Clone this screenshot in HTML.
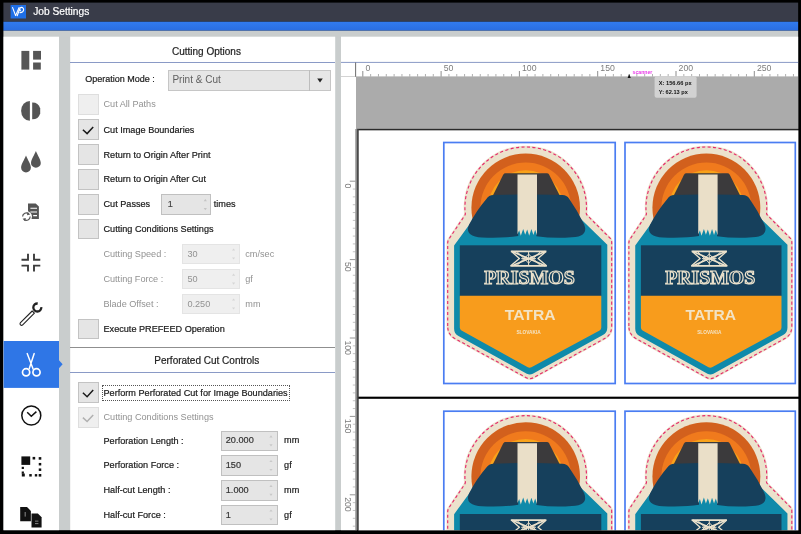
<!DOCTYPE html>
<html lang="en"><head><meta charset="utf-8"><title>Job Settings</title>
<style>
html,body{margin:0;padding:0;background:#000;}
body{width:801px;height:534px;overflow:hidden;position:relative;font-family:"Liberation Sans",sans-serif;}
#app{position:absolute;left:0;top:0;width:801px;height:534px;background:#000;overflow:hidden;}
.abs{position:absolute;}
.t{position:absolute;white-space:nowrap;line-height:1;font-family:"Liberation Sans",sans-serif;}
.b{-webkit-text-stroke:0.2px currentColor;}
.cb{position:absolute;box-sizing:border-box;background:#e5e5e5;border:1px solid #c3c3c3;}
.cb.dis{background:#efefef;border-color:#dedede;}
.nb{position:absolute;box-sizing:border-box;background:#e5e5e5;border:1px solid #c0c0c0;}
.nb.dis{background:#efefef;border-color:#e4e4e4;}
svg{position:absolute;left:0;top:0;overflow:visible;will-change:transform;}
#txt{position:absolute;left:0;top:0;width:801px;height:534px;will-change:transform;}
</style></head><body><div id="app">

<svg width="801" height="534" viewBox="0 0 801 534" style="will-change:auto"><defs><linearGradient id="bl" x1="0" y1="0" x2="0" y2="1"><stop offset="0" stop-color="#317bef"/><stop offset="1" stop-color="#2a6de1"/></linearGradient></defs><rect x="3.4" y="2.6" width="795" height="19.1" fill="#393c49"/><rect x="3.4" y="21.7" width="795" height="9" fill="url(#bl)"/><rect x="3.4" y="30.7" width="795" height="499.8" fill="#c9cdcd"/><rect x="3.6" y="36.7" width="55.4" height="493.8" fill="#fff"/><rect x="70.2" y="36.7" width="265" height="493.8" fill="#fff"/><rect x="341" y="36.7" width="457.4" height="493.8" fill="#fff"/><rect x="3.6" y="341" width="55.4" height="46.9" fill="#2f76e6"/></svg>


<div class="abs" style="left:70px;top:61.7px;width:265px;height:1px;background:#8a9ac6;"></div>

<div class="abs" style="left:168px;top:70px;width:162.5px;height:20.5px;box-sizing:border-box;background:#e6e6e6;border:1px solid #c6c6c6;"></div>
<div class="abs" style="left:309px;top:70px;width:1px;height:20.5px;background:#bdbdbd;"></div>

<div class="cb dis" style="left:77.8px;top:94.4px;width:21px;height:20.6px;"></div>

<div class="cb" style="left:77.8px;top:119.3px;width:21px;height:20.6px;"></div>

<div class="cb" style="left:77.8px;top:144.3px;width:21px;height:20.6px;"></div>

<div class="cb" style="left:77.8px;top:169.2px;width:21px;height:20.6px;"></div>

<div class="cb" style="left:77.8px;top:194.2px;width:21px;height:20.6px;"></div>

<div class="cb" style="left:77.8px;top:218.7px;width:21px;height:20.6px;"></div>

<div class="cb" style="left:77.8px;top:318.9px;width:21px;height:20.6px;"></div>

<div class="cb" style="left:77.8px;top:382.4px;width:21px;height:20.6px;"></div>

<div class="cb dis" style="left:77.8px;top:407.2px;width:21px;height:20.6px;"></div>

<div class="nb" style="left:161px;top:194px;width:50px;height:21px;"></div>



<div class="nb dis" style="left:181.7px;top:243.8px;width:58px;height:20.5px;"></div>



<div class="nb dis" style="left:181.7px;top:268.9px;width:58px;height:20.5px;"></div>



<div class="nb dis" style="left:181.7px;top:293.8px;width:58px;height:20.5px;"></div>


<div class="abs" style="left:70px;top:347.3px;width:265px;height:1px;background:#8f8f8f;"></div>

<div class="abs" style="left:70px;top:371.7px;width:265px;height:1px;background:#8a9ac6;"></div>
<div class="abs" style="left:102px;top:384.8px;width:188px;height:16px;box-sizing:border-box;border:1px dotted #555;"></div>

<div class="nb" style="left:220.5px;top:430.8px;width:57.5px;height:20.3px;"></div>



<div class="nb" style="left:220.5px;top:455.4px;width:57.5px;height:20.3px;"></div>



<div class="nb" style="left:220.5px;top:480.3px;width:57.5px;height:20.3px;"></div>



<div class="nb" style="left:220.5px;top:504.9px;width:57.5px;height:20.3px;"></div>


<svg width="801" height="534" viewBox="0 0 801 534">
<rect x="10.6" y="5" width="15.4" height="13.5" fill="#1f6fe6"/>
<path d="M12.6 7.6 L15.6 15.6 L19 7.6 M17.2 15.8 L19.6 9.2 M20 12.6 C24.6 12.6 24.6 7.4 21.4 7.4 C19.6 7.4 19.4 9.6 20.4 10.6" fill="none" stroke="#fff" stroke-width="1.1" stroke-linecap="round" stroke-linejoin="round"/>
<path d="M317.2 78.4 h5.6 l-2.8 4 z" fill="#222"/>
<path d="M82.9 129.7 L87.1 133.6 L93.2 127.0" fill="none" stroke="#1a1a1a" stroke-width="1.5" stroke-linejoin="miter"/>
<path d="M82.9 392.8 L87.1 396.7 L93.2 390.1" fill="none" stroke="#1a1a1a" stroke-width="1.5" stroke-linejoin="miter"/>
<path d="M82.9 417.6 L87.1 421.5 L93.2 414.9" fill="none" stroke="#b0b0b0" stroke-width="1.5" stroke-linejoin="miter"/>
<path d="M203.7 201.2 h3.2 l-1.6 -2.2 z M203.7 208.0 h3.2 l-1.6 2.2 z" fill="#c4c4c4"/>
<path d="M232.0 250.6 h3.2 l-1.6 -2.2 z M232.0 257.4 h3.2 l-1.6 2.2 z" fill="#d6d6d6"/>
<path d="M232.0 275.7 h3.2 l-1.6 -2.2 z M232.0 282.5 h3.2 l-1.6 2.2 z" fill="#d6d6d6"/>
<path d="M232.0 300.6 h3.2 l-1.6 -2.2 z M232.0 307.4 h3.2 l-1.6 2.2 z" fill="#d6d6d6"/>
<path d="M269.4 437.5 h3.2 l-1.6 -2.2 z M269.4 444.3 h3.2 l-1.6 2.2 z" fill="#c8c8c8"/>
<path d="M269.4 462.1 h3.2 l-1.6 -2.2 z M269.4 468.9 h3.2 l-1.6 2.2 z" fill="#c8c8c8"/>
<path d="M269.4 487.0 h3.2 l-1.6 -2.2 z M269.4 493.8 h3.2 l-1.6 2.2 z" fill="#c8c8c8"/>
<path d="M269.4 511.6 h3.2 l-1.6 -2.2 z M269.4 518.4 h3.2 l-1.6 2.2 z" fill="#c8c8c8"/>
<path d="M59 360.2 L62.6 364.2 L59 368.2 z" fill="#2f76e6"/>
<rect x="21.4" y="50.9" width="7.9" height="18.7" fill="#555555"/><rect x="33.1" y="50.9" width="7.9" height="8.7" fill="#555555"/><rect x="33.1" y="62.5" width="7.7" height="7.1" fill="#555555"/>
<path d="M29.9 100.9 A8.8 9.95 0 0 0 29.9 120.8 z" fill="#555555"/>
<path d="M32.2 102.5 A8.2 8.4 0 0 1 40.2 108.4 L40.2 113.4 A8.2 8.4 0 0 1 32.2 119.3 z" fill="#555555"/>
<path d="M35.9 150.9 C37.4 154.9 40.8 159.4 40.8 162.9 A4.9 4.9 0 0 1 31.0 162.9 C31.0 159.4 34.4 154.9 35.9 150.9 z" fill="#555555"/>
<path d="M26 155.6 C27.5 159.6 30.9 164.1 30.9 167.6 A4.9 4.9 0 0 1 21.1 167.6 C21.1 164.1 24.5 159.6 26 155.6 z" fill="#555555"/>
<path d="M28 203.4 h7.7 l3.2 3.2 v12.4 h-10.9 z" fill="#555555"/>
<path d="M30.4 208.2 h6.6 M30.4 212 h6.6 M33.2 215.6 h3.8" stroke="#fff" stroke-width="1.1" fill="none"/>
<circle cx="26.4" cy="216.6" r="5.6" fill="#fff"/>
<path d="M22.6 216.6 A3.8 3.8 0 0 1 28.8 213.7 M30.2 216.6 A3.8 3.8 0 0 1 24 219.5" stroke="#555555" stroke-width="1.2" fill="none"/>
<path d="M27.6 212 l2.6 2.4 l-3.2 0.8 z M25.2 221.2 l-2.6 -2.4 l3.2 -0.8 z" fill="#555555"/>
<path d="M21.5 259.8 H28 V253.7 M40.3 259.8 H34 V253.7 M21.5 265.6 H28 V271.6 M40.3 265.6 H34 V271.6" stroke="#3c3c3c" stroke-width="1.9" fill="none"/>
<path d="M20.5 322.7 L32.2 311 L34.4 313.2 L22.7 324.9 A1.55 1.55 0 0 1 20.5 322.7 z" fill="#fff" stroke="#222" stroke-width="1.1" stroke-linejoin="round"/>
<path d="M41.3 307.2 A4 4 0 1 1 37.7 303.5" fill="none" stroke="#222" stroke-width="2.3"/>
<g fill="none" stroke="#fff" stroke-linecap="round"><path d="M27.2 353.6 L33.2 369.2 M34.2 353.6 L29.2 368.8" stroke-width="1.45"/><circle cx="26.1" cy="372.3" r="3.6" stroke-width="1.7"/><circle cx="36.5" cy="372.3" r="3.6" stroke-width="1.7"/></g>
<circle cx="31.3" cy="415.5" r="9.5" fill="none" stroke="#111" stroke-width="1.5"/><path d="M27.2 412.2 L31.3 416.2 L36.4 411.6" fill="none" stroke="#111" stroke-width="1.5"/>
<rect x="21.4" y="456.4" width="8.8" height="8.5" fill="#111"/>
<rect x="32.60" y="456.90" width="2.6" height="2.6" fill="#111"/>
<rect x="38.70" y="457.10" width="2.6" height="2.6" fill="#111"/>
<rect x="38.75" y="462.95" width="2.5" height="2.5" fill="#111"/>
<rect x="38.75" y="468.45" width="2.5" height="2.5" fill="#111"/>
<rect x="38.70" y="474.00" width="2.6" height="2.6" fill="#111"/>
<rect x="34.80" y="474.10" width="2.4" height="2.4" fill="#111"/>
<rect x="29.25" y="474.05" width="2.5" height="2.5" fill="#111"/>
<rect x="21.80" y="473.50" width="3.0" height="3.0" fill="#111"/>
<rect x="21.70" y="471.50" width="2.2" height="2.2" fill="#111"/>
<rect x="21.70" y="466.80" width="2.2" height="2.2" fill="#111"/>
<path d="M20.2 507 h6.8 l3.9 3.9 v10.3 h-10.7 z" fill="#111"/><path d="M31.5 513.6 h6.4 l3.7 3.7 v10.3 h-10.1 z" fill="#111"/>
<rect x="24.6" y="512" width="1.2" height="4.6" fill="#777"/><rect x="35" y="520.6" width="3.4" height="1.1" fill="#777"/><rect x="35" y="523" width="3.4" height="1.1" fill="#777"/>
<rect x="341" y="61.9" width="457.5" height="1" fill="#8a9ac6"/>
<rect x="356" y="76.4" width="442.5" height="52.6" fill="#ababab"/>
<rect x="341" y="76" width="15" height="0.8" fill="#c8c8c8"/>
<rect x="355.2" y="62.5" width="0.9" height="14.2" fill="#5c5c5c"/>
<path d="M370.63 74.00 V76.6 M378.46 74.00 V76.6 M386.29 74.00 V76.6 M394.12 74.00 V76.6 M401.95 74.00 V76.6 M409.78 74.00 V76.6 M417.61 74.00 V76.6 M425.44 74.00 V76.6 M433.27 74.00 V76.6 M448.93 74.00 V76.6 M456.76 74.00 V76.6 M464.59 74.00 V76.6 M472.42 74.00 V76.6 M480.25 74.00 V76.6 M488.08 74.00 V76.6 M495.91 74.00 V76.6 M503.74 74.00 V76.6 M511.57 74.00 V76.6 M527.23 74.00 V76.6 M535.06 74.00 V76.6 M542.89 74.00 V76.6 M550.72 74.00 V76.6 M558.55 74.00 V76.6 M566.38 74.00 V76.6 M574.21 74.00 V76.6 M582.04 74.00 V76.6 M589.87 74.00 V76.6 M605.53 74.00 V76.6 M613.36 74.00 V76.6 M621.19 74.00 V76.6 M629.02 74.00 V76.6 M636.85 74.00 V76.6 M644.68 74.00 V76.6 M652.51 74.00 V76.6 M660.34 74.00 V76.6 M668.17 74.00 V76.6 M683.83 74.00 V76.6 M691.66 74.00 V76.6 M699.49 74.00 V76.6 M707.32 74.00 V76.6 M715.15 74.00 V76.6 M722.98 74.00 V76.6 M730.81 74.00 V76.6 M738.64 74.00 V76.6 M746.47 74.00 V76.6 M762.13 74.00 V76.6 M769.96 74.00 V76.6 M777.79 74.00 V76.6 M785.62 74.00 V76.6 M793.45 74.00 V76.6" stroke="#9c9c9c" stroke-width="0.8" fill="none"/>
<path d="M362.80 71.00 V76.6 M441.10 71.00 V76.6 M519.40 71.00 V76.6 M597.70 71.00 V76.6 M676.00 71.00 V76.6 M754.30 71.00 V76.6" stroke="#707070" stroke-width="0.8" fill="none"/>
<text x="365.40" y="71.2" font-family='"Liberation Sans", sans-serif' font-size="8.7" fill="#7c7c7c">0</text>
<text x="443.70" y="71.2" font-family='"Liberation Sans", sans-serif' font-size="8.7" fill="#7c7c7c">50</text>
<text x="522.00" y="71.2" font-family='"Liberation Sans", sans-serif' font-size="8.7" fill="#7c7c7c">100</text>
<text x="600.30" y="71.2" font-family='"Liberation Sans", sans-serif' font-size="8.7" fill="#7c7c7c">150</text>
<text x="678.60" y="71.2" font-family='"Liberation Sans", sans-serif' font-size="8.7" fill="#7c7c7c">200</text>
<text x="756.90" y="71.2" font-family='"Liberation Sans", sans-serif' font-size="8.7" fill="#7c7c7c">250</text>
<path d="M352.80 189.04 H355.6 M352.80 196.88 H355.6 M352.80 204.72 H355.6 M352.80 212.56 H355.6 M352.80 220.40 H355.6 M352.80 228.24 H355.6 M352.80 236.08 H355.6 M352.80 243.92 H355.6 M352.80 251.76 H355.6 M352.80 267.44 H355.6 M352.80 275.28 H355.6 M352.80 283.12 H355.6 M352.80 290.96 H355.6 M352.80 298.80 H355.6 M352.80 306.64 H355.6 M352.80 314.48 H355.6 M352.80 322.32 H355.6 M352.80 330.16 H355.6 M352.80 345.84 H355.6 M352.80 353.68 H355.6 M352.80 361.52 H355.6 M352.80 369.36 H355.6 M352.80 377.20 H355.6 M352.80 385.04 H355.6 M352.80 392.88 H355.6 M352.80 400.72 H355.6 M352.80 408.56 H355.6 M352.80 424.24 H355.6 M352.80 432.08 H355.6 M352.80 439.92 H355.6 M352.80 447.76 H355.6 M352.80 455.60 H355.6 M352.80 463.44 H355.6 M352.80 471.28 H355.6 M352.80 479.12 H355.6 M352.80 486.96 H355.6 M352.80 502.64 H355.6 M352.80 510.48 H355.6 M352.80 518.32 H355.6 M352.80 526.16 H355.6" stroke="#b4b4b4" stroke-width="0.8" fill="none"/>
<path d="M349.80 181.20 H355.6 M349.80 259.60 H355.6 M349.80 338.00 H355.6 M349.80 416.40 H355.6 M349.80 494.80 H355.6" stroke="#7a7a7a" stroke-width="0.8" fill="none"/>
<rect x="355.2" y="129" width="1.8" height="401" fill="#9c9c9c"/>
<text transform="translate(344.6 183.60) rotate(90)" font-family='"Liberation Sans", sans-serif' font-size="8.7" fill="#7c7c7c">0</text>
<text transform="translate(344.6 262.00) rotate(90)" font-family='"Liberation Sans", sans-serif' font-size="8.7" fill="#7c7c7c">50</text>
<text transform="translate(344.6 340.40) rotate(90)" font-family='"Liberation Sans", sans-serif' font-size="8.7" fill="#7c7c7c">100</text>
<text transform="translate(344.6 418.80) rotate(90)" font-family='"Liberation Sans", sans-serif' font-size="8.7" fill="#7c7c7c">150</text>
<text transform="translate(344.6 497.20) rotate(90)" font-family='"Liberation Sans", sans-serif' font-size="8.7" fill="#7c7c7c">200</text>
<rect x="357.7" y="129.6" width="450" height="268" fill="#fff" stroke="#2b2b2b" stroke-width="1.5"/>
<rect x="357.7" y="397.7" width="450" height="140" fill="#fff" stroke="#2b2b2b" stroke-width="1.5"/>
<rect x="357" y="396.8" width="442" height="1.9" fill="#000"/>
<rect x="356.9" y="129" width="1.6" height="401" fill="#4a4a4a"/>
<path d="M627.6 78 l1.6 -4 l1.6 4 z" fill="#111"/>
<text x="632.6" y="73.9" font-family='"Liberation Sans", sans-serif' font-size="5.6" font-weight="bold" fill="#e83ae8" textLength="19.8" lengthAdjust="spacingAndGlyphs">scanner</text>
<rect x="654.6" y="76.2" width="42" height="21.5" rx="2" fill="#d2d2d2"/>
<text x="658.8" y="85.3" font-family='"Liberation Sans", sans-serif' font-size="6.2" font-weight="bold" fill="#111" textLength="32.8" lengthAdjust="spacingAndGlyphs">X: 156.66 px</text>
<text x="658.8" y="94.4" font-family='"Liberation Sans", sans-serif' font-size="6.2" font-weight="bold" fill="#111" textLength="29" lengthAdjust="spacingAndGlyphs">Y: 62.13 px</text>
<defs><clipPath id="cpA"><rect x="-2" y="-2" width="176" height="246"/></clipPath><clipPath id="cpB"><rect x="-2" y="-2" width="176" height="121"/></clipPath></defs>
<g transform="translate(443.8 142.5) scale(1 1)" clip-path="url(#cpA)">
<rect x="0" y="0" width="171.4" height="241" fill="#fff" stroke="#4a7df2" stroke-width="1.7"/>
<path d="M3.9 183.54 L3.9 100.5 Q3.9 98.4 5.1 96.6 L20.85 73.14 Q22.15 71.14 21.25 69.54 A60.8 60.8 0 1 1 142.55 69.54 Q141.95 71.34 143.35 72.74 L166.70000000000002 96.2 Q167.9 97.8 167.9 100 L167.9 183.65 Q167.9 192.15 160.90 196.00 L90.00 235.00 Q86.0 237.2 82.00 235.00 L10.90 195.89 Q3.9 192.04 3.9 183.54 Z" fill="#ece2cc" stroke="#ece2cc" stroke-width="2.4" stroke-linejoin="round"/>
<circle cx="81.9" cy="65.3" r="54.3" fill="#d2601d"/>
<circle cx="81.9" cy="65.3" r="45.3" fill="#f07a1d"/>
<circle cx="81.9" cy="65.3" r="37.6" fill="#f9a21a"/>
<path d="M10.3 103 L32 73.2 L134 73.5 L163.5 102.2 L163.5 185.18 Q163.5 190.18 159.10 192.59 L89.00 231.15 Q86.0 232.8 83.00 231.15 L14.70 193.59 Q10.3 191.17 10.3 186.17 Z" fill="#0f8aaa"/>
<path d="M48.6 54 L59.4 32.2 Q60.2 30.8 61.8 30.8 L103 30.8 Q104.6 30.8 105.4 32.2 L116.4 54 Z" fill="#3b3a3c"/>
<path d="M42.6 56.4 Q45 52.6 49.6 52.5 L74.5 51.9 L74.5 93.6 Q60 95.8 38 95 Q30.5 95 26.2 91.6 Q22.6 88.2 25.2 82.2 Q32.6 68 42.6 56.4 Z" fill="#16405c"/>
<path d="M92.6 51.9 L118.6 52.6 Q123 52.7 125.2 56 Q134 68.6 140.4 82 Q143 88.6 139.2 91.8 Q135.6 94.6 128 94.8 Q110 96.2 92.6 93.8 Z" fill="#16405c"/>
<path d="M73.7 32 L93.2 32 L93.2 92.8 L91.4 87.2 L89.6 92.4 L87.6 86.6 L85.4 93.2 L83.4 87 L81.4 92.2 L79.4 86.4 L77 93.2 L75.4 87.8 L73.7 91.8 Z" fill="#eadfc8"/>
<rect x="16" y="102.8" width="141.5" height="51" fill="#16405c"/>
<path d="M16 153.3 H157.5 V185 Q157.5 187.1 155.8 188 L87.6 224.7 Q85.8 225.6 84 224.7 L17.7 188 Q16 187.1 16 185 Z" fill="#f89c1c"/>
<g fill="none" stroke="#ece2cc" stroke-linejoin="round"><path d="M67 108.9 H102.6 M66.6 123.3 H103" stroke-width="1.8"/><path d="M68.4 109 L101.4 123.2 M101.4 109 L68.4 123.2" stroke-width="1.7"/><path d="M67.7 109 L75.6 116.1 L66.9 123.2 M102.2 109 L94.2 116.1 L102.8 123.2" stroke-width="1.3"/><path d="M73 109 L84.8 120.6 L96.6 109 M73 123.2 L84.8 111.6 L96.6 123.2 M84.8 109 V123.2 M77.5 116.1 H92.1" stroke-width="1.0"/><circle cx="81.6" cy="116.1" r="1.7" stroke-width="0.8"/><circle cx="88" cy="116.1" r="1.7" stroke-width="0.8"/></g>
<text x="40.4" y="141.7" font-family='"Liberation Serif", serif' font-weight="bold" font-size="18" fill="#16405c" stroke="#ece2cc" stroke-width="1.1" textLength="90.6" lengthAdjust="spacingAndGlyphs">PRISMOS</text>
<text x="61" y="177.4" font-family='"Liberation Sans", sans-serif' font-weight="bold" font-size="14" fill="#f3e3c4" textLength="50.8" lengthAdjust="spacingAndGlyphs">TATRA</text>
<text x="72.6" y="191.4" font-family='"Liberation Sans", sans-serif' font-weight="bold" font-size="5" fill="#f3e3c4" textLength="24.4" lengthAdjust="spacingAndGlyphs">SLOVAKIA</text>
<path d="M3.9 183.54 L3.9 100.5 Q3.9 98.4 5.1 96.6 L20.85 73.14 Q22.15 71.14 21.25 69.54 A60.8 60.8 0 1 1 142.55 69.54 Q141.95 71.34 143.35 72.74 L166.70000000000002 96.2 Q167.9 97.8 167.9 100 L167.9 183.65 Q167.9 192.15 160.90 196.00 L90.00 235.00 Q86.0 237.2 82.00 235.00 L10.90 195.89 Q3.9 192.04 3.9 183.54 Z" fill="none" stroke="#e62a6a" stroke-width="1.15" stroke-dasharray="3.1 2.4"/>
</g>
<g transform="translate(625.0 142.5) scale(0.9936 1)" clip-path="url(#cpA)">
<rect x="0" y="0" width="171.4" height="241" fill="#fff" stroke="#4a7df2" stroke-width="1.7"/>
<path d="M3.9 183.54 L3.9 100.5 Q3.9 98.4 5.1 96.6 L20.85 73.14 Q22.15 71.14 21.25 69.54 A60.8 60.8 0 1 1 142.55 69.54 Q141.95 71.34 143.35 72.74 L166.70000000000002 96.2 Q167.9 97.8 167.9 100 L167.9 183.65 Q167.9 192.15 160.90 196.00 L90.00 235.00 Q86.0 237.2 82.00 235.00 L10.90 195.89 Q3.9 192.04 3.9 183.54 Z" fill="#ece2cc" stroke="#ece2cc" stroke-width="2.4" stroke-linejoin="round"/>
<circle cx="81.9" cy="65.3" r="54.3" fill="#d2601d"/>
<circle cx="81.9" cy="65.3" r="45.3" fill="#f07a1d"/>
<circle cx="81.9" cy="65.3" r="37.6" fill="#f9a21a"/>
<path d="M10.3 103 L32 73.2 L134 73.5 L163.5 102.2 L163.5 185.18 Q163.5 190.18 159.10 192.59 L89.00 231.15 Q86.0 232.8 83.00 231.15 L14.70 193.59 Q10.3 191.17 10.3 186.17 Z" fill="#0f8aaa"/>
<path d="M48.6 54 L59.4 32.2 Q60.2 30.8 61.8 30.8 L103 30.8 Q104.6 30.8 105.4 32.2 L116.4 54 Z" fill="#3b3a3c"/>
<path d="M42.6 56.4 Q45 52.6 49.6 52.5 L74.5 51.9 L74.5 93.6 Q60 95.8 38 95 Q30.5 95 26.2 91.6 Q22.6 88.2 25.2 82.2 Q32.6 68 42.6 56.4 Z" fill="#16405c"/>
<path d="M92.6 51.9 L118.6 52.6 Q123 52.7 125.2 56 Q134 68.6 140.4 82 Q143 88.6 139.2 91.8 Q135.6 94.6 128 94.8 Q110 96.2 92.6 93.8 Z" fill="#16405c"/>
<path d="M73.7 32 L93.2 32 L93.2 92.8 L91.4 87.2 L89.6 92.4 L87.6 86.6 L85.4 93.2 L83.4 87 L81.4 92.2 L79.4 86.4 L77 93.2 L75.4 87.8 L73.7 91.8 Z" fill="#eadfc8"/>
<rect x="16" y="102.8" width="141.5" height="51" fill="#16405c"/>
<path d="M16 153.3 H157.5 V185 Q157.5 187.1 155.8 188 L87.6 224.7 Q85.8 225.6 84 224.7 L17.7 188 Q16 187.1 16 185 Z" fill="#f89c1c"/>
<g fill="none" stroke="#ece2cc" stroke-linejoin="round"><path d="M67 108.9 H102.6 M66.6 123.3 H103" stroke-width="1.8"/><path d="M68.4 109 L101.4 123.2 M101.4 109 L68.4 123.2" stroke-width="1.7"/><path d="M67.7 109 L75.6 116.1 L66.9 123.2 M102.2 109 L94.2 116.1 L102.8 123.2" stroke-width="1.3"/><path d="M73 109 L84.8 120.6 L96.6 109 M73 123.2 L84.8 111.6 L96.6 123.2 M84.8 109 V123.2 M77.5 116.1 H92.1" stroke-width="1.0"/><circle cx="81.6" cy="116.1" r="1.7" stroke-width="0.8"/><circle cx="88" cy="116.1" r="1.7" stroke-width="0.8"/></g>
<text x="40.4" y="141.7" font-family='"Liberation Serif", serif' font-weight="bold" font-size="18" fill="#16405c" stroke="#ece2cc" stroke-width="1.1" textLength="90.6" lengthAdjust="spacingAndGlyphs">PRISMOS</text>
<text x="61" y="177.4" font-family='"Liberation Sans", sans-serif' font-weight="bold" font-size="14" fill="#f3e3c4" textLength="50.8" lengthAdjust="spacingAndGlyphs">TATRA</text>
<text x="72.6" y="191.4" font-family='"Liberation Sans", sans-serif' font-weight="bold" font-size="5" fill="#f3e3c4" textLength="24.4" lengthAdjust="spacingAndGlyphs">SLOVAKIA</text>
<path d="M3.9 183.54 L3.9 100.5 Q3.9 98.4 5.1 96.6 L20.85 73.14 Q22.15 71.14 21.25 69.54 A60.8 60.8 0 1 1 142.55 69.54 Q141.95 71.34 143.35 72.74 L166.70000000000002 96.2 Q167.9 97.8 167.9 100 L167.9 183.65 Q167.9 192.15 160.90 196.00 L90.00 235.00 Q86.0 237.2 82.00 235.00 L10.90 195.89 Q3.9 192.04 3.9 183.54 Z" fill="none" stroke="#e62a6a" stroke-width="1.15" stroke-dasharray="3.1 2.4"/>
</g>
<g transform="translate(443.8 411.2) scale(1 1)" clip-path="url(#cpB)">
<rect x="0" y="0" width="171.4" height="241" fill="#fff" stroke="#4a7df2" stroke-width="1.7"/>
<path d="M3.9 183.54 L3.9 100.5 Q3.9 98.4 5.1 96.6 L20.85 73.14 Q22.15 71.14 21.25 69.54 A60.8 60.8 0 1 1 142.55 69.54 Q141.95 71.34 143.35 72.74 L166.70000000000002 96.2 Q167.9 97.8 167.9 100 L167.9 183.65 Q167.9 192.15 160.90 196.00 L90.00 235.00 Q86.0 237.2 82.00 235.00 L10.90 195.89 Q3.9 192.04 3.9 183.54 Z" fill="#ece2cc" stroke="#ece2cc" stroke-width="2.4" stroke-linejoin="round"/>
<circle cx="81.9" cy="65.3" r="54.3" fill="#d2601d"/>
<circle cx="81.9" cy="65.3" r="45.3" fill="#f07a1d"/>
<circle cx="81.9" cy="65.3" r="37.6" fill="#f9a21a"/>
<path d="M10.3 103 L32 73.2 L134 73.5 L163.5 102.2 L163.5 185.18 Q163.5 190.18 159.10 192.59 L89.00 231.15 Q86.0 232.8 83.00 231.15 L14.70 193.59 Q10.3 191.17 10.3 186.17 Z" fill="#0f8aaa"/>
<path d="M48.6 54 L59.4 32.2 Q60.2 30.8 61.8 30.8 L103 30.8 Q104.6 30.8 105.4 32.2 L116.4 54 Z" fill="#3b3a3c"/>
<path d="M42.6 56.4 Q45 52.6 49.6 52.5 L74.5 51.9 L74.5 93.6 Q60 95.8 38 95 Q30.5 95 26.2 91.6 Q22.6 88.2 25.2 82.2 Q32.6 68 42.6 56.4 Z" fill="#16405c"/>
<path d="M92.6 51.9 L118.6 52.6 Q123 52.7 125.2 56 Q134 68.6 140.4 82 Q143 88.6 139.2 91.8 Q135.6 94.6 128 94.8 Q110 96.2 92.6 93.8 Z" fill="#16405c"/>
<path d="M73.7 32 L93.2 32 L93.2 92.8 L91.4 87.2 L89.6 92.4 L87.6 86.6 L85.4 93.2 L83.4 87 L81.4 92.2 L79.4 86.4 L77 93.2 L75.4 87.8 L73.7 91.8 Z" fill="#eadfc8"/>
<rect x="16" y="102.8" width="141.5" height="51" fill="#16405c"/>
<path d="M16 153.3 H157.5 V185 Q157.5 187.1 155.8 188 L87.6 224.7 Q85.8 225.6 84 224.7 L17.7 188 Q16 187.1 16 185 Z" fill="#f89c1c"/>
<g fill="none" stroke="#ece2cc" stroke-linejoin="round"><path d="M67 108.9 H102.6 M66.6 123.3 H103" stroke-width="1.8"/><path d="M68.4 109 L101.4 123.2 M101.4 109 L68.4 123.2" stroke-width="1.7"/><path d="M67.7 109 L75.6 116.1 L66.9 123.2 M102.2 109 L94.2 116.1 L102.8 123.2" stroke-width="1.3"/><path d="M73 109 L84.8 120.6 L96.6 109 M73 123.2 L84.8 111.6 L96.6 123.2 M84.8 109 V123.2 M77.5 116.1 H92.1" stroke-width="1.0"/><circle cx="81.6" cy="116.1" r="1.7" stroke-width="0.8"/><circle cx="88" cy="116.1" r="1.7" stroke-width="0.8"/></g>
<text x="40.4" y="141.7" font-family='"Liberation Serif", serif' font-weight="bold" font-size="18" fill="#16405c" stroke="#ece2cc" stroke-width="1.1" textLength="90.6" lengthAdjust="spacingAndGlyphs">PRISMOS</text>
<text x="61" y="177.4" font-family='"Liberation Sans", sans-serif' font-weight="bold" font-size="14" fill="#f3e3c4" textLength="50.8" lengthAdjust="spacingAndGlyphs">TATRA</text>
<text x="72.6" y="191.4" font-family='"Liberation Sans", sans-serif' font-weight="bold" font-size="5" fill="#f3e3c4" textLength="24.4" lengthAdjust="spacingAndGlyphs">SLOVAKIA</text>
<path d="M3.9 183.54 L3.9 100.5 Q3.9 98.4 5.1 96.6 L20.85 73.14 Q22.15 71.14 21.25 69.54 A60.8 60.8 0 1 1 142.55 69.54 Q141.95 71.34 143.35 72.74 L166.70000000000002 96.2 Q167.9 97.8 167.9 100 L167.9 183.65 Q167.9 192.15 160.90 196.00 L90.00 235.00 Q86.0 237.2 82.00 235.00 L10.90 195.89 Q3.9 192.04 3.9 183.54 Z" fill="none" stroke="#e62a6a" stroke-width="1.15" stroke-dasharray="3.1 2.4"/>
</g>
<g transform="translate(625.0 411.2) scale(0.9936 1)" clip-path="url(#cpB)">
<rect x="0" y="0" width="171.4" height="241" fill="#fff" stroke="#4a7df2" stroke-width="1.7"/>
<path d="M3.9 183.54 L3.9 100.5 Q3.9 98.4 5.1 96.6 L20.85 73.14 Q22.15 71.14 21.25 69.54 A60.8 60.8 0 1 1 142.55 69.54 Q141.95 71.34 143.35 72.74 L166.70000000000002 96.2 Q167.9 97.8 167.9 100 L167.9 183.65 Q167.9 192.15 160.90 196.00 L90.00 235.00 Q86.0 237.2 82.00 235.00 L10.90 195.89 Q3.9 192.04 3.9 183.54 Z" fill="#ece2cc" stroke="#ece2cc" stroke-width="2.4" stroke-linejoin="round"/>
<circle cx="81.9" cy="65.3" r="54.3" fill="#d2601d"/>
<circle cx="81.9" cy="65.3" r="45.3" fill="#f07a1d"/>
<circle cx="81.9" cy="65.3" r="37.6" fill="#f9a21a"/>
<path d="M10.3 103 L32 73.2 L134 73.5 L163.5 102.2 L163.5 185.18 Q163.5 190.18 159.10 192.59 L89.00 231.15 Q86.0 232.8 83.00 231.15 L14.70 193.59 Q10.3 191.17 10.3 186.17 Z" fill="#0f8aaa"/>
<path d="M48.6 54 L59.4 32.2 Q60.2 30.8 61.8 30.8 L103 30.8 Q104.6 30.8 105.4 32.2 L116.4 54 Z" fill="#3b3a3c"/>
<path d="M42.6 56.4 Q45 52.6 49.6 52.5 L74.5 51.9 L74.5 93.6 Q60 95.8 38 95 Q30.5 95 26.2 91.6 Q22.6 88.2 25.2 82.2 Q32.6 68 42.6 56.4 Z" fill="#16405c"/>
<path d="M92.6 51.9 L118.6 52.6 Q123 52.7 125.2 56 Q134 68.6 140.4 82 Q143 88.6 139.2 91.8 Q135.6 94.6 128 94.8 Q110 96.2 92.6 93.8 Z" fill="#16405c"/>
<path d="M73.7 32 L93.2 32 L93.2 92.8 L91.4 87.2 L89.6 92.4 L87.6 86.6 L85.4 93.2 L83.4 87 L81.4 92.2 L79.4 86.4 L77 93.2 L75.4 87.8 L73.7 91.8 Z" fill="#eadfc8"/>
<rect x="16" y="102.8" width="141.5" height="51" fill="#16405c"/>
<path d="M16 153.3 H157.5 V185 Q157.5 187.1 155.8 188 L87.6 224.7 Q85.8 225.6 84 224.7 L17.7 188 Q16 187.1 16 185 Z" fill="#f89c1c"/>
<g fill="none" stroke="#ece2cc" stroke-linejoin="round"><path d="M67 108.9 H102.6 M66.6 123.3 H103" stroke-width="1.8"/><path d="M68.4 109 L101.4 123.2 M101.4 109 L68.4 123.2" stroke-width="1.7"/><path d="M67.7 109 L75.6 116.1 L66.9 123.2 M102.2 109 L94.2 116.1 L102.8 123.2" stroke-width="1.3"/><path d="M73 109 L84.8 120.6 L96.6 109 M73 123.2 L84.8 111.6 L96.6 123.2 M84.8 109 V123.2 M77.5 116.1 H92.1" stroke-width="1.0"/><circle cx="81.6" cy="116.1" r="1.7" stroke-width="0.8"/><circle cx="88" cy="116.1" r="1.7" stroke-width="0.8"/></g>
<text x="40.4" y="141.7" font-family='"Liberation Serif", serif' font-weight="bold" font-size="18" fill="#16405c" stroke="#ece2cc" stroke-width="1.1" textLength="90.6" lengthAdjust="spacingAndGlyphs">PRISMOS</text>
<text x="61" y="177.4" font-family='"Liberation Sans", sans-serif' font-weight="bold" font-size="14" fill="#f3e3c4" textLength="50.8" lengthAdjust="spacingAndGlyphs">TATRA</text>
<text x="72.6" y="191.4" font-family='"Liberation Sans", sans-serif' font-weight="bold" font-size="5" fill="#f3e3c4" textLength="24.4" lengthAdjust="spacingAndGlyphs">SLOVAKIA</text>
<path d="M3.9 183.54 L3.9 100.5 Q3.9 98.4 5.1 96.6 L20.85 73.14 Q22.15 71.14 21.25 69.54 A60.8 60.8 0 1 1 142.55 69.54 Q141.95 71.34 143.35 72.74 L166.70000000000002 96.2 Q167.9 97.8 167.9 100 L167.9 183.65 Q167.9 192.15 160.90 196.00 L90.00 235.00 Q86.0 237.2 82.00 235.00 L10.90 195.89 Q3.9 192.04 3.9 183.54 Z" fill="none" stroke="#e62a6a" stroke-width="1.15" stroke-dasharray="3.1 2.4"/>
</g>
<rect x="0" y="530.4" width="801" height="5" fill="#000"/>
<rect x="798.4" y="0" width="3" height="534" fill="#000"/>
</svg>
<div id="txt"><span class="t b" style="left:33.20px;top:6.57px;font-size:10.2px;color:#ffffff;font-weight:normal;">Job Settings</span>
<span class="t b" style="left:172.00px;top:46.73px;font-size:10px;color:#222;font-weight:normal;">Cutting Options</span>
<span class="t b" style="left:85.30px;top:74.78px;font-size:9.0px;color:#1a1a1a;font-weight:normal;">Operation Mode :</span>
<span class="t" style="left:172.40px;top:74.94px;font-size:10px;color:#5f5f5f;font-weight:normal;">Print &amp; Cut</span>
<span class="t" style="left:103.50px;top:100.25px;font-size:9.15px;color:#929292;font-weight:normal;">Cut All Paths</span>
<span class="t b" style="left:103.50px;top:125.75px;font-size:9.15px;color:#1a1a1a;font-weight:normal;">Cut Image Boundaries</span>
<span class="t b" style="left:103.50px;top:150.75px;font-size:9.15px;color:#1a1a1a;font-weight:normal;">Return to Origin After Print</span>
<span class="t b" style="left:103.50px;top:175.05px;font-size:9.15px;color:#1a1a1a;font-weight:normal;">Return to Origin After Cut</span>
<span class="t b" style="left:103.50px;top:200.05px;font-size:9.15px;color:#1a1a1a;font-weight:normal;">Cut Passes</span>
<span class="t b" style="left:103.50px;top:224.55px;font-size:9.15px;color:#1a1a1a;font-weight:normal;">Cutting Conditions Settings</span>
<span class="t b" style="left:103.50px;top:324.75px;font-size:9.15px;color:#1a1a1a;font-weight:normal;">Execute PREFEED Operation</span>
<span class="t b" style="left:103.50px;top:388.65px;font-size:9.15px;color:#1a1a1a;font-weight:normal;">Perform Perforated Cut for Image Boundaries</span>
<span class="t" style="left:103.50px;top:413.05px;font-size:9.15px;color:#929292;font-weight:normal;">Cutting Conditions Settings</span>
<span class="t b" style="left:167.80px;top:200.05px;font-size:9.15px;color:#444;font-weight:normal;">1</span>
<span class="t b" style="left:213.80px;top:200.05px;font-size:9.15px;color:#1a1a1a;font-weight:normal;">times</span>
<span class="t" style="left:103.40px;top:249.55px;font-size:9.15px;color:#929292;font-weight:normal;">Cutting Speed :</span>
<span class="t" style="left:187.40px;top:249.55px;font-size:9.15px;color:#929292;font-weight:normal;">30</span>
<span class="t" style="left:245.30px;top:249.55px;font-size:9.15px;color:#929292;font-weight:normal;">cm/sec</span>
<span class="t" style="left:103.40px;top:274.65px;font-size:9.15px;color:#929292;font-weight:normal;">Cutting Force :</span>
<span class="t" style="left:187.40px;top:274.65px;font-size:9.15px;color:#929292;font-weight:normal;">50</span>
<span class="t" style="left:245.30px;top:274.65px;font-size:9.15px;color:#929292;font-weight:normal;">gf</span>
<span class="t" style="left:103.40px;top:299.55px;font-size:9.15px;color:#929292;font-weight:normal;">Blade Offset :</span>
<span class="t" style="left:187.40px;top:299.55px;font-size:9.15px;color:#929292;font-weight:normal;">0.250</span>
<span class="t" style="left:245.30px;top:299.55px;font-size:9.15px;color:#929292;font-weight:normal;">mm</span>
<span class="t b" style="left:154.30px;top:356.34px;font-size:10px;color:#222;font-weight:normal;">Perforated Cut Controls</span>
<span class="t b" style="left:103.50px;top:437.15px;font-size:9.15px;color:#1a1a1a;font-weight:normal;">Perforation Length :</span>
<span class="t b" style="left:225.80px;top:436.45px;font-size:9.15px;color:#333;font-weight:normal;">20.000</span>
<span class="t b" style="left:284.10px;top:436.45px;font-size:9.15px;color:#1a1a1a;font-weight:normal;">mm</span>
<span class="t b" style="left:103.50px;top:461.45px;font-size:9.15px;color:#1a1a1a;font-weight:normal;">Perforation Force :</span>
<span class="t b" style="left:225.80px;top:461.05px;font-size:9.15px;color:#333;font-weight:normal;">150</span>
<span class="t b" style="left:284.10px;top:461.05px;font-size:9.15px;color:#1a1a1a;font-weight:normal;">gf</span>
<span class="t b" style="left:103.50px;top:486.35px;font-size:9.15px;color:#1a1a1a;font-weight:normal;">Half-cut Length :</span>
<span class="t b" style="left:225.80px;top:485.95px;font-size:9.15px;color:#333;font-weight:normal;">1.000</span>
<span class="t b" style="left:284.10px;top:485.95px;font-size:9.15px;color:#1a1a1a;font-weight:normal;">mm</span>
<span class="t b" style="left:103.50px;top:510.55px;font-size:9.15px;color:#1a1a1a;font-weight:normal;">Half-cut Force :</span>
<span class="t b" style="left:225.80px;top:510.55px;font-size:9.15px;color:#333;font-weight:normal;">1</span>
<span class="t b" style="left:284.10px;top:510.55px;font-size:9.15px;color:#1a1a1a;font-weight:normal;">gf</span></div>
</div></body></html>
